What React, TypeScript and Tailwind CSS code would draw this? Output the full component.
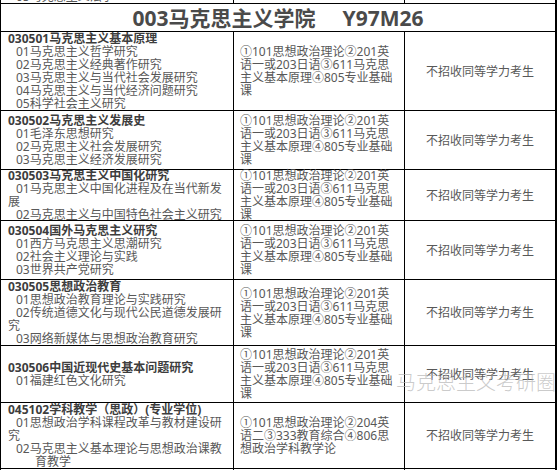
import React from "react";

const FONT = { fontFamily: '"Noto Sans", "Noto Sans CJK SC", sans-serif' };

type LeftLine = { t: string; b?: boolean; ind?: string };

const MID_A = ["①101思想政治理论②201英", "语一或203日语③611马克思", "主义基本原理④805专业基础", "课"];
const MID_B = ["①101思想政治理论②204英", "语二③333教育综合④806思", "想政治学科教学论"];

const rows: { h: string; left: LeftLine[]; mid: string[] }[] = [
  {
    h: "h-[79px]",
    left: [
      { t: "030501马克思主义基本原理", b: true },
      { t: "01马克思主义哲学研究", ind: "pl-[8px]" },
      { t: "02马克思主义经典著作研究", ind: "pl-[8px]" },
      { t: "03马克思主义与当代社会发展研究", ind: "pl-[8px]" },
      { t: "04马克思主义与当代经济问题研究", ind: "pl-[8px]" },
      { t: "05科学社会主义研究", ind: "pl-[8px]" },
    ],
    mid: MID_A,
  },
  {
    h: "h-[59px]",
    left: [
      { t: "030502马克思主义发展史", b: true },
      { t: "01毛泽东思想研究", ind: "pl-[8px]" },
      { t: "02马克思主义社会发展研究", ind: "pl-[8px]" },
      { t: "03马克思主义经济发展研究", ind: "pl-[8px]" },
    ],
    mid: MID_A,
  },
  {
    h: "h-[51px]",
    left: [
      { t: "030503马克思主义中国化研究", b: true },
      { t: "01马克思主义中国化进程及在当代新发", ind: "pl-[8px]" },
      { t: "展" },
      { t: "02马克思主义与中国特色社会主义研究", ind: "pl-[8px]" },
    ],
    mid: MID_A,
  },
  {
    h: "h-[59px]",
    left: [
      { t: "030504国外马克思主义研究", b: true },
      { t: "01西方马克思主义思潮研究", ind: "pl-[8px]" },
      { t: "02社会主义理论与实践", ind: "pl-[8px]" },
      { t: "03世界共产党研究", ind: "pl-[8px]" },
    ],
    mid: MID_A,
  },
  {
    h: "h-[66px]",
    left: [
      { t: "030505思想政治教育", b: true },
      { t: "01思想政治教育理论与实践研究", ind: "pl-[8px]" },
      { t: "02传统道德文化与现代公民道德发展研", ind: "pl-[8px]" },
      { t: "究" },
      { t: "03网络新媒体与思想政治教育研究", ind: "pl-[8px]" },
    ],
    mid: MID_A,
  },
  {
    h: "h-[57px]",
    left: [
      { t: "030506中国近现代史基本问题研究", b: true },
      { t: "01福建红色文化研究", ind: "pl-[8px]" },
    ],
    mid: MID_A,
  },
  {
    h: "h-[66px]",
    left: [
      { t: "045102学科教学（思政）(专业学位)", b: true },
      { t: "01思想政治学科课程改革与教材建设研", ind: "pl-[8px]" },
      { t: "究" },
      { t: "02马克思主义基本理论与思想政治课教", ind: "pl-[8px]" },
      { t: "育教学", ind: "pl-[27px]" },
    ],
    mid: MID_B,
  },
];

export default function App() {
  return (
    <div className="bg-white w-[558px] h-[470px] overflow-hidden" style={FONT}>
      <div className="relative w-[557px] border-l border-r-2 border-black text-[12px] leading-[13px] text-[#585858]">
        {/* partial top row */}
        <div className="flex h-[4px] border-b border-black overflow-hidden">
          <div className="w-[233px] border-r border-black pl-[15px] overflow-hidden">
            <div className="mt-[-10px] whitespace-nowrap">05马克思主义法学</div>
          </div>
          <div className="w-[171px] border-r border-black"></div>
          <div className="flex-1"></div>
        </div>
        {/* header */}
        <div className="flex h-[28px] items-center justify-center border-b border-black">
          <span className="text-[21px] leading-[24px] font-bold text-[#4a4a4a] whitespace-nowrap">
            003马克思主义学院<span className="ml-[27px]">Y97M26</span>
          </span>
        </div>
        {rows.map((r, i) => (
          <div key={i} className={`flex ${r.h} border-b border-black`}>
            <div className="w-[233px] border-r border-black flex flex-col justify-center pl-[7px]">
              {r.left.map((l, j) => (
                <div
                  key={j}
                  className={`whitespace-nowrap ${l.b ? "font-bold text-[#3d3d3d]" : ""} ${l.ind ?? ""}`}
                >
                  {l.t}
                </div>
              ))}
            </div>
            <div className="w-[171px] border-r border-black flex flex-col justify-center pl-[6px]">
              {r.mid.map((m, j) => (
                <div key={j} className="whitespace-nowrap">
                  {m}
                </div>
              ))}
            </div>
            <div className="flex-1 flex items-center justify-center whitespace-nowrap">不招收同等学力考生</div>
          </div>
        ))}
        <div className="flex h-[4px]">
          <div className="w-[233px] border-r border-black"></div>
          <div className="w-[171px] border-r border-black"></div>
          <div className="flex-1"></div>
        </div>
        {/* watermark */}
        <div className="absolute left-[395px] top-[371px] text-[20px] leading-[24px] font-light text-[#b4b4b4]/70 whitespace-nowrap pointer-events-none">
          马克思主义考研圈
        </div>
      </div>
    </div>
  );
}
